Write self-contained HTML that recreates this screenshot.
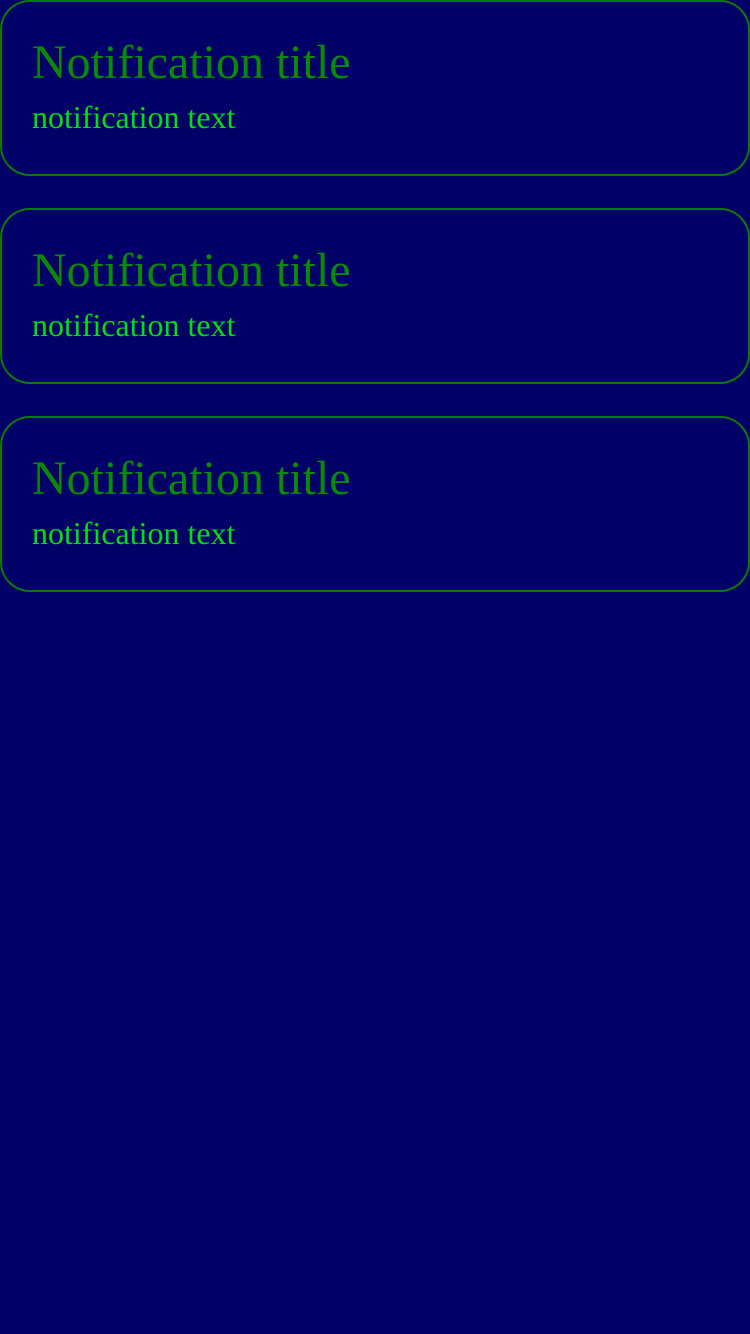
<!DOCTYPE html>
<html><head><style>
html,body{margin:0;padding:0;background:#000066;width:750px;height:1334px;overflow:hidden}
.c{position:absolute;left:0;width:746px;height:172px;border:2px solid #0a7a0a;border-radius:30px;font-family:"Liberation Serif",serif}
.t{position:absolute;left:30px;top:37px;font-size:48px;line-height:1;color:#0a8a0a;white-space:nowrap}
.s{position:absolute;left:30px;top:99px;font-size:32px;line-height:1;color:#00e010;white-space:nowrap}
</style></head><body>
<div class="c" style="top:0"><div class="t">Notification title</div><div class="s">notification text</div></div>
<div class="c" style="top:208px"><div class="t">Notification title</div><div class="s">notification text</div></div>
<div class="c" style="top:416px"><div class="t">Notification title</div><div class="s">notification text</div></div>
</body></html>
